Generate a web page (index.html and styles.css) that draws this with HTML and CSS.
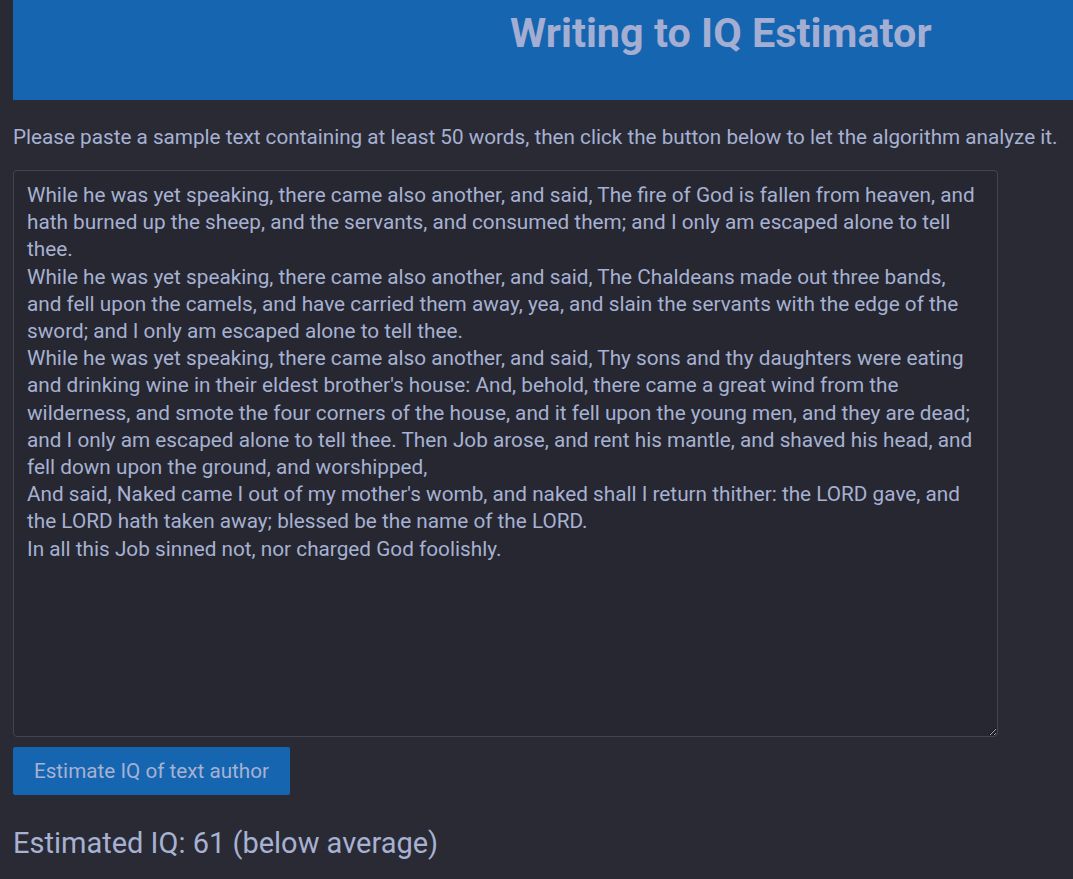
FILE: index.html
```html
<!DOCTYPE html>
<html lang="en">
<head>
<meta charset="utf-8">
<title>Writing to IQ Estimator</title>
<link rel="stylesheet" href="styles.css">
</head>
<body>
<header class="banner"><h1 class="title">Writing to IQ Estimator</h1></header>
<p class="intro">Please paste a sample text containing at least 50 words, then click the button below to let the algorithm analyze it.</p>
<textarea class="sample" spellcheck="false">While he was yet speaking, there came also another, and said, The fire of God is fallen from heaven, and hath burned up the sheep, and the servants, and consumed them; and I only am escaped alone to tell thee.
While he was yet speaking, there came also another, and said, The Chaldeans made out three bands, and fell upon the camels, and have carried them away, yea, and slain the servants with the edge of the sword; and I only am escaped alone to tell thee.
While he was yet speaking, there came also another, and said, Thy sons and thy daughters were eating and drinking wine in their eldest brother's house: And, behold, there came a great wind from the wilderness, and smote the four corners of the house, and it fell upon the young men, and they are dead; and I only am escaped alone to tell thee. Then Job arose, and rent his mantle, and shaved his head, and fell down upon the ground, and worshipped,
And said, Naked came I out of my mother's womb, and naked shall I return thither: the LORD gave, and the LORD hath taken away; blessed be the name of the LORD.
In all this Job sinned not, nor charged God foolishly.</textarea>
<div class="actions"><button class="estimate">Estimate IQ of text author</button></div>
<p class="result">Estimated IQ: 61 (below average)</p>
</body>
</html>
```
FILE: styles.css
```css
html, body {
  margin: 0;
  background: #292a34;
}
body {
  padding: 0 0 0 13px;
  font-family: Roboto, "Liberation Sans", sans-serif;
  color: #a7b1d2;
  overflow: hidden;
}
.banner {
  background: #1565b0;
  height: 100px;
  box-sizing: border-box;
  padding: 9px 0 0 497px;
}
.title {
  margin: 0;
  font-size: 41.4px;
  font-weight: 700;
  line-height: 48px;
  color: #a3aed2;
}
.intro {
  margin: 24px 0 0;
  font-size: 20.7px;
  line-height: 26px;
  white-space: nowrap;
}
.sample {
  display: block;
  margin: 20px 0 0;
  width: 985px;
  height: 567px;
  box-sizing: border-box;
  padding: 11px 12px 10px 13px;
  background: #262730;
  border: 1px solid #424453;
  border-radius: 4px;
  color: #a7b1d2;
  font-family: Roboto, "Liberation Sans", sans-serif;
  font-size: 20.75px;
  line-height: 27.2px;
  resize: both;
  outline: none;
}
.actions {
  margin-top: 10px;
}
.estimate {
  width: 277px;
  height: 48px;
  background: #1565b0;
  border: none;
  border-radius: 2px;
  color: #a7b1d2;
  font-family: Roboto, "Liberation Sans", sans-serif;
  font-size: 20.7px;
  padding: 0;
}
.result {
  margin: 28px 0 0;
  font-size: 29px;
  line-height: 40px;
  color: #a7b1d2;
}
```
